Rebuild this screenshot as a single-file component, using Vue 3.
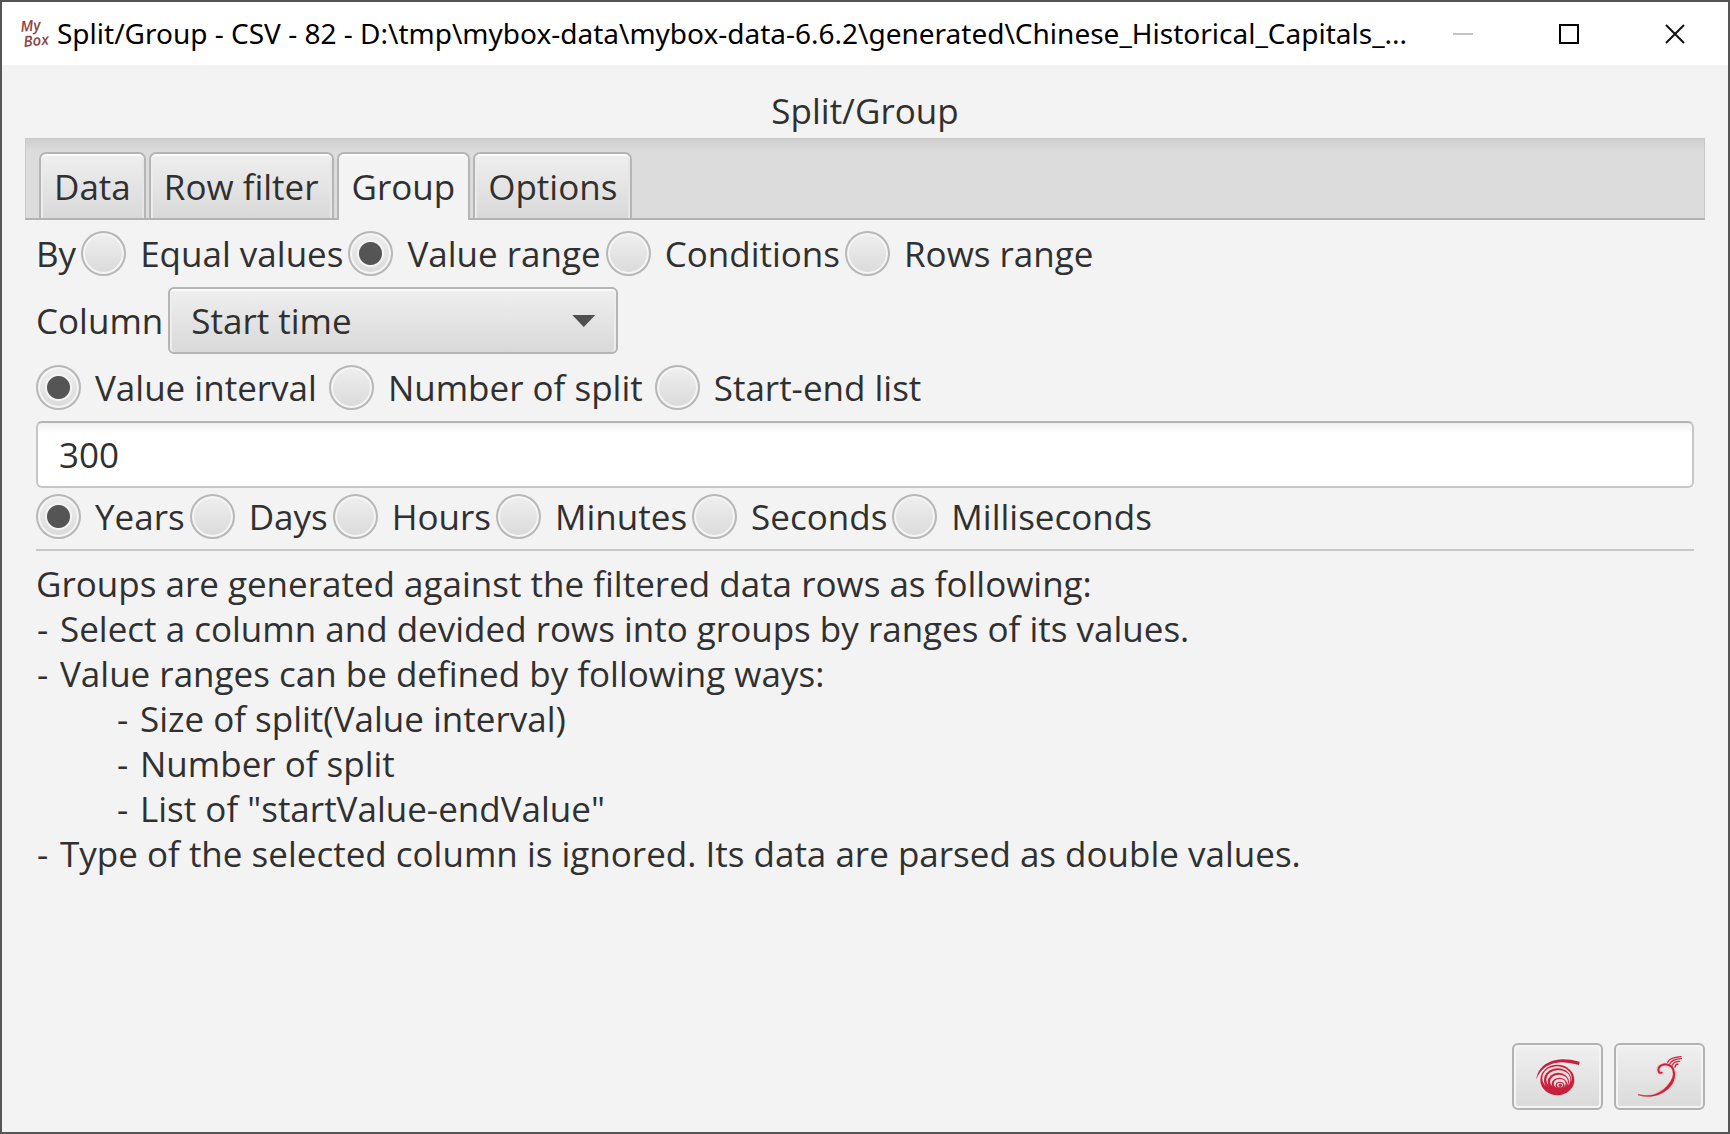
<script setup>
import { ref } from 'vue'

const tabs = ['Data', 'Row filter', 'Group', 'Options']
const activeTab = ref('Group')

const groupModes = ['Equal values', 'Value range', 'Conditions', 'Rows range']
const groupMode = ref('Value range')

const columns = ['Start time']
const column = ref('Start time')

const splitModes = ['Value interval', 'Number of split', 'Start-end list']
const splitMode = ref('Value interval')

const interval = ref('300')

const units = ['Years', 'Days', 'Hours', 'Minutes', 'Seconds', 'Milliseconds']
const unit = ref('Years')

const notes = [
  { text: 'Select a column and devided rows into groups by ranges of its values.' },
  { text: 'Value ranges can be defined by following ways:' },
  { text: 'Size of split(Value interval)', nested: true },
  { text: 'Number of split', nested: true },
  { text: 'List of "startValue-endValue"', nested: true },
  { text: 'Type of the selected column is ignored. Its data are parsed as double values.' }
]

const rings = [
  [85, 92, 51, 46], [84, 87, 44, 36],
  [86, 93, 41, 36], [88, 91, 36, 29],
  [88, 98, 32, 28], [90, 97, 27, 21],
  [91, 104, 23, 19], [92, 103, 18, 14],
  [93, 108, 13, 11], [93, 107, 9, 7],
  [94, 108, 5, 5]
]
</script>

<template>
  <div class="window">
    <header class="titlebar">
      <svg class="logo" width="32" height="36" viewBox="0 0 32 36" aria-hidden="true">
        <text x="1" y="16" transform="rotate(-6 1 16)">My</text>
        <text x="4" y="31" transform="rotate(-6 4 31)">Box</text>
      </svg>
      <span class="caption">Split/Group - CSV - 82 - D:\tmp\mybox-data\mybox-data-6.6.2\generated\Chinese_Historical_Capitals_...</span>
      <div class="window-controls">
        <button type="button" aria-label="Minimize" disabled>
          <svg width="20" height="20" viewBox="0 0 20 20"><path d="M0 10h20" stroke="#c4c4c4" stroke-width="2" /></svg>
        </button>
        <button type="button" aria-label="Maximize">
          <svg width="20" height="20" viewBox="0 0 20 20"><path d="M1 1h18v18H1z" fill="none" stroke="#000" stroke-width="2" /></svg>
        </button>
        <button type="button" aria-label="Close">
          <svg width="20" height="20" viewBox="0 0 20 20"><path d="M1 1l18 18M19 1L1 19" stroke="#111" stroke-width="2" /></svg>
        </button>
      </div>
    </header>

    <main class="content">
      <h1>Split/Group</h1>

      <div class="tabs" role="tablist">
        <button
          v-for="tab in tabs"
          :key="tab"
          type="button"
          role="tab"
          class="tab"
          :class="{ active: tab === activeTab }"
          :aria-selected="tab === activeTab"
          @click="activeTab = tab"
        >{{ tab }}</button>
      </div>

      <section class="panel">
        <div class="row" role="radiogroup" aria-label="By">
          <span>By</span>
          <label v-for="m in groupModes" :key="m" class="radio">
            <input v-model="groupMode" type="radio" name="group-mode" :value="m">
            <span>{{ m }}</span>
          </label>
        </div>

        <div class="row">
          <label for="column">Column</label>
          <div class="select">
            <select id="column" v-model="column">
              <option v-for="c in columns" :key="c">{{ c }}</option>
            </select>
            <span class="arrow"></span>
          </div>
        </div>

        <div class="row spaced" role="radiogroup" aria-label="Split by">
          <label v-for="m in splitModes" :key="m" class="radio">
            <input v-model="splitMode" type="radio" name="split-mode" :value="m">
            <span>{{ m }}</span>
          </label>
        </div>

        <input v-model="interval" class="field" type="text" aria-label="Value interval">

        <div class="row units" role="radiogroup" aria-label="Unit">
          <label v-for="u in units" :key="u" class="radio">
            <input v-model="unit" type="radio" name="unit" :value="u">
            <span>{{ u }}</span>
          </label>
        </div>

        <hr>

        <div class="notes">
          <p>Groups are generated against the filtered data rows as following:</p>
          <p v-for="n in notes" :key="n.text" class="item" :class="{ nested: n.nested }">
            <span class="dash">-</span>
            <span>{{ n.text }}</span>
          </p>
        </div>
      </section>

      <footer class="actions">
        <button type="button" aria-label="Cancel">
          <svg width="44" height="38" viewBox="21 26 132 114">
            <path d="M22 90C27 52 60 31 100 30Q126 30 152 37L150 47Q122 40 97 39C62 40 34 58 22 90z" fill="#c8203c" />
            <ellipse
              v-for="(r, i) in rings"
              :key="i"
              :cx="r[0]" :cy="r[1]" :rx="r[2]" :ry="r[3]"
              :fill="i % 2 ? '#e8dcde' : '#c8203c'"
            />
          </svg>
        </button>
        <button type="button" aria-label="OK">
          <svg width="44" height="44" viewBox="20 18 132 132" fill="none" stroke-linecap="round">
            <g stroke="#f3b9c0" stroke-opacity=".5" stroke-width="13">
              <path d="M78 134Q130 110 130 75Q127 47 102 46Q81 48 80 62Q81 75 92 72" />
            </g>
            <path d="M20 136Q62 148 96 122Q123 98 126 74L131 68Q134 108 94 131Q58 150 20 138z" fill="#cf2136" stroke="#cf2136" stroke-width="1" />
            <g stroke="#cf2136">
              <path d="M128 74Q127 47 102 46Q82 48 81 62Q82 74 91 71" stroke-width="6" />
              <path d="M109 40Q114 26 149 23" stroke-width="4" />
              <path d="M116 43Q123 31 151 29" stroke-width="4" />
              <path d="M123 48Q128 37 145 37" stroke-width="4" />
              <path d="M131 55Q131 46 140 45" stroke-width="4" />
            </g>
          </svg>
        </button>
      </footer>
    </main>
  </div>
</template>

<style>
body {
  margin: 0;
}
</style>

<style scoped>
.window {
  display: flex;
  flex-direction: column;
  box-sizing: border-box;
  min-height: 100vh;
  border: 2px solid #555;
  background: #f3f3f3;
  color: #303030;
  font-family: "Open Sans", "Noto Sans", sans-serif;
  font-size: 35px;
  line-height: 45px;
}

button,
input,
select {
  box-sizing: border-box;
  margin: 0;
  color: inherit;
  font: inherit;
}

.titlebar {
  display: flex;
  align-items: center;
  height: 63px;
  padding-left: 18px;
  background: #fff;
  color: #000;
}

.logo {
  flex: none;
  overflow: visible;
  margin-right: 5px;
  fill: #8f4444;
  font-size: 15px;
  font-style: italic;
  font-weight: 600;
  line-height: 16px;
}

.caption {
  flex: 1;
  font-family: "Noto Sans", "Open Sans", sans-serif;
  font-size: 28px;
  white-space: nowrap;
}

.window-controls {
  display: flex;
  align-self: stretch;
}

.window-controls button {
  display: flex;
  align-items: center;
  justify-content: center;
  width: 106px;
  padding: 0;
  border: 0;
  background: none;
}

.content {
  display: flex;
  flex: 1;
  flex-direction: column;
  padding: 23px 23px 22px;
}

h1 {
  margin: 0 0 5px;
  font-size: inherit;
  font-weight: 400;
  text-align: center;
}

.tabs {
  display: flex;
  gap: 3px;
  box-sizing: border-box;
  height: 82px;
  padding: 13px 13px 0;
  border: 1px solid #c8c8c8;
  border-bottom: 2px solid #b2b2b2;
  background: linear-gradient(#cecece, #dcdcdc 12px);
}

.tab {
  height: 66px;
  padding: 0 13px;
  border: 2px solid #b5b5b5;
  border-bottom: 0;
  border-radius: 7px 7px 0 0;
  background: linear-gradient(#efefef, #d9d9d9);
  box-shadow: inset 0 2px #fbfbfb, inset 2px 0 #ececec, inset -2px 0 #e6e6e6;
}

.tab.active {
  height: 68px;
  padding-bottom: 2px;
  background: #f3f3f3;
  box-shadow: inset 0 2px #fff;
}

.panel {
  padding: 0 11px;
}

.row {
  display: flex;
  align-items: center;
  gap: 5px;
  height: 67px;
}

.row.spaced {
  gap: 12px;
}

.row.units {
  height: 56px;
}

.radio {
  display: flex;
  align-items: center;
  gap: 14px;
}

.radio input {
  width: 45px;
  height: 45px;
  border: 2px solid #b8b8b8;
  border-radius: 50%;
  appearance: none;
  background: linear-gradient(#efefef, #dadada);
  box-shadow: inset 0 0 0 2px #f5f5f5;
}

.radio input:checked {
  background: radial-gradient(circle, #555 11px, #f4f4f4 12px, #f4f4f4 13px, transparent 14px), linear-gradient(#efefef, #dadada);
}

.select {
  position: relative;
  width: 450px;
}

.select select {
  display: block;
  width: 100%;
  height: 67px;
  padding: 0 21px;
  border: 2px solid #b5b5b5;
  border-radius: 6px;
  appearance: none;
  background: linear-gradient(#efefef, #d9d9d9);
  box-shadow: inset 0 2px #fafafa, inset 2px 0 #ededed, inset -2px 0 #ededed;
}

.arrow {
  position: absolute;
  top: 28px;
  right: 23px;
  width: 23px;
  height: 12px;
  background: #505050;
  clip-path: polygon(0 0, 100% 0, 50% 100%);
  pointer-events: none;
}

.field {
  display: block;
  width: 100%;
  height: 67px;
  padding: 0 21px;
  border: 2px solid #c6c6c6;
  border-top-color: #b4b4b4;
  border-radius: 6px;
  background: linear-gradient(#f0f0f0, #fff 10px);
}

hr {
  height: 2px;
  margin: 5px 0 10px;
  border: 0;
  background: #c8c8c8;
}

.notes p {
  margin: 0;
}

.notes .item {
  display: flex;
  padding-left: 1px;
}

.notes .nested {
  padding-left: 81px;
}

.dash {
  flex: none;
  width: 23px;
}

.actions {
  display: flex;
  justify-content: flex-end;
  gap: 11px;
  margin-top: auto;
}

.actions button {
  display: flex;
  align-items: center;
  justify-content: center;
  width: 91px;
  height: 67px;
  padding: 0;
  border: 2px solid #b2b2b2;
  border-radius: 6px;
  background: linear-gradient(#f0f0f0, #dadada);
  box-shadow: inset 0 0 0 2px #f4f4f4;
}
</style>
